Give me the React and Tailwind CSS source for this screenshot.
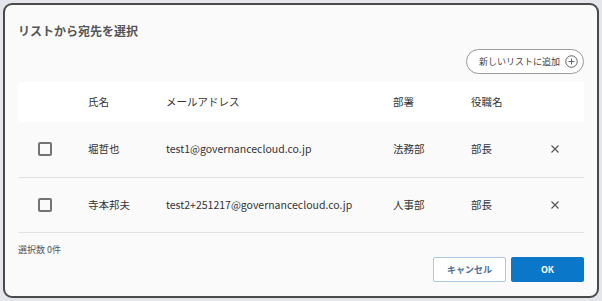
import React from 'react'

const rows = [
    { name: '堀哲也', email: 'test1@governancecloud.co.jp', dept: '法務部', title: '部長' },
    { name: '寺本邦夫', email: 'test2+251217@governancecloud.co.jp', dept: '人事部', title: '部長' },
]

function App() {
    return (
        <div
            className="w-[602px] h-[301px] bg-[#e4e6ec] p-[3px]"
            style={{ fontFamily: '"Noto Sans CJK JP", "Noto Sans", sans-serif' }}
        >
            <div className="w-full h-full bg-[#fafafa] border-2 border-[#4a4a4a] rounded-[9px] px-[13px] flex flex-col">
                <h2 className="mt-[17px] text-[12px] leading-[18px] font-bold text-[#555]">
                    リストから宛先を選択
                </h2>

                <div className="flex justify-end mt-[9px]">
                    <button className="w-[118px] h-[25px] pr-[5px] rounded-full border border-[#9a9a9a] bg-white flex items-center justify-end gap-[5px] text-[9px] text-[#444]">
                        新しいリストに追加
                        <svg width="13" height="13" viewBox="0 0 14 14" fill="none" stroke="#555" strokeWidth="1">
                            <circle cx="7" cy="7" r="6.2" />
                            <path d="M7 3.8v6.4M3.8 7h6.4" />
                        </svg>
                    </button>
                </div>

                <div className="mt-[8px] text-[10.5px] text-[#333]">
                    <div className="h-[40px] bg-white flex items-center">
                        <div className="w-[70px]"></div>
                        <div className="w-[78px]">氏名</div>
                        <div className="w-[227px]">メールアドレス</div>
                        <div className="w-[78px]">部署</div>
                        <div className="w-[78px]">役職名</div>
                    </div>
                    {rows.map((r, i) => (
                        <div key={i} className="h-[55.5px] flex items-center border-b border-[#e2e2e2]">
                            <div className="w-[70px] pl-[20px]">
                                <div className="w-[14px] h-[14px] border-2 border-[#737373] rounded-[2px]"></div>
                            </div>
                            <div className="w-[78px]">{r.name}</div>
                            <div className="w-[227px]">{r.email}</div>
                            <div className="w-[78px]">{r.dept}</div>
                            <div className="w-[78px]">{r.title}</div>
                            <div className="ml-[2px]">
                                <svg width="8" height="8" viewBox="0 0 8 8" stroke="#555" strokeWidth="1.1">
                                    <path d="M0.5 0.5l7 7M7.5 0.5l-7 7" />
                                </svg>
                            </div>
                        </div>
                    ))}
                </div>

                <div className="mt-[10px] text-[9px] leading-[13px] text-[#555]">選択数 0件</div>

                <div className="flex justify-end gap-[5px] mt-[1px]">
                    <button className="w-[73px] h-[25px] bg-white border border-[#a9c8e6] rounded-[2px] text-[9px] font-bold text-[#4a6f96]">
                        キャンセル
                    </button>
                    <button className="w-[73px] h-[25px] bg-[#0a77c9] rounded-[2px] text-[9px] font-bold text-white">
                        OK
                    </button>
                </div>
            </div>
        </div>
    )
}

export default App
